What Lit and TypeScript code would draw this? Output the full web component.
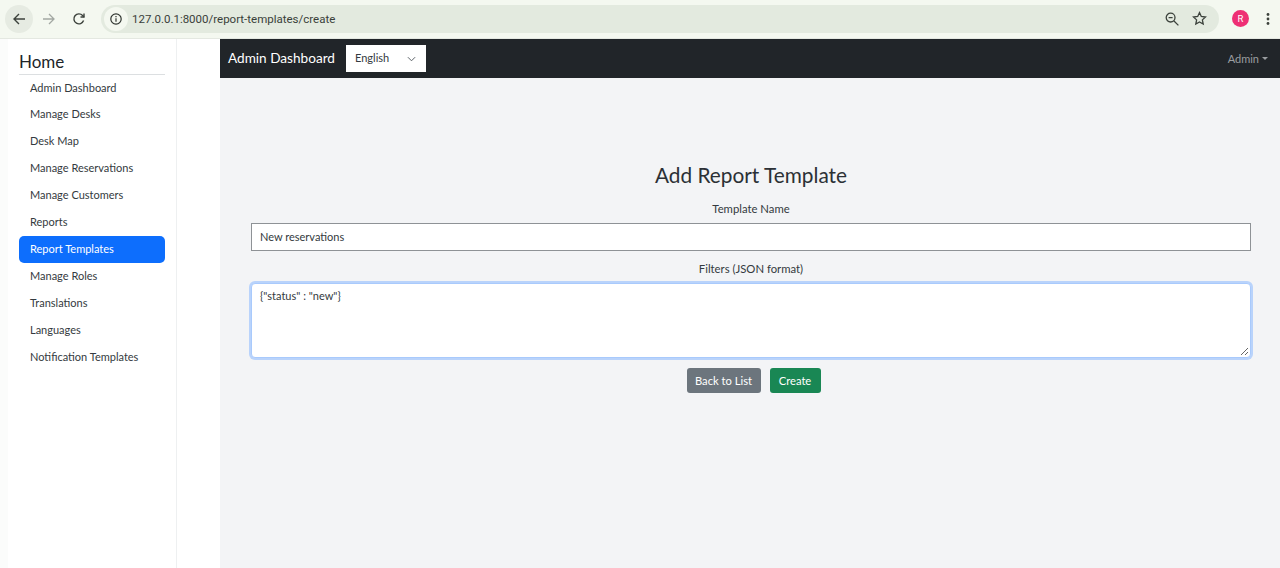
import { LitElement, html, css } from "lit";
import { customElement } from "lit/decorators.js";

const items = ["Admin Dashboard","Manage Desks","Desk Map","Manage Reservations","Manage Customers","Reports","Report Templates","Manage Roles","Translations","Languages","Notification Templates"];

@customElement("app-root")
export class AppRoot extends LitElement {
  static styles = css`
    :host { display: block; width: 1280px; height: 568px; overflow: hidden; font-family: Lato, "Noto Sans", sans-serif; color: #212529; background: #fff; }
    * { box-sizing: border-box; }
    .chrome { height: 39px; background: #f4f8f0; border-bottom: 1px solid #e4e8e1; display: flex; align-items: center; padding: 0 0 1px 5px; }
    .navbtn { width: 28px; height: 28px; border-radius: 50%; display: flex; align-items: center; justify-content: center; flex: none; margin-right: 2px; }
    .navbtn.back { background: #e6ebe2; }
    .navbtn svg, .pill svg, .dots { display: block; }
    .pill { margin-left: 6px; width: 1118px; height: 28px; border-radius: 14px; background: #e3eadf; display: flex; align-items: center; padding-left: 3px; padding-right: 12px; }
    .info { width: 24px; height: 24px; border-radius: 50%; background: #f4f8f0; display: flex; align-items: center; justify-content: center; flex: none; }
    .url { margin-left: 4px; font-size: 11.5px; color: #3a3f3a; flex: 1; font-family: Roboto, sans-serif; }
    .pill .zoom { margin-right: 13px; }
    .avatar { width: 17px; height: 17px; border-radius: 50%; background: #ee2f74; color: #fff; font-size: 9.5px; display: flex; align-items: center; justify-content: center; margin-left: 13px; flex: none; font-family: Roboto, sans-serif; }
    .dots { margin-left: 17px; }
    .body { display: flex; height: 529px; }
    .gutter { width: 8px; background: #fbfcfb; flex: none; }
    .sidebar { width: 169px; flex: none; padding: 11px 11px 0; border-right: 1px solid #eef0f1; background: #fff; }
    .spacer { width: 43px; flex: none; background: #fff; }
    h2 { margin: 0; font-size: 17px; font-weight: 400; line-height: 24px; border-bottom: 1px solid #dcdfe1; height: 25px; }
    ul { list-style: none; margin: 0; padding: 0; }
    li { height: 27px; display: flex; align-items: center; padding: 0 0 2px 11px; font-size: 11px; color: #343a40; border-radius: 5px; width: 146px; }
    li.first { height: 26px; }
    li.active { background: #0d6efd; color: #fff; }
    .main { flex: 1; background: #f3f4f6; display: flex; flex-direction: column; min-width: 0; }
    .topbar { height: 39px; background: #212529; display: flex; align-items: center; padding: 0 12px 0 8px; flex: none; }
    .brand { color: #fff; font-size: 13.6px; width: 118px; padding-bottom: 1px; }
    .lang { width: 80px; height: 27px; background: #fff; display: flex; align-items: center; justify-content: space-between; padding: 0 10px 0 9px; font-size: 11px; color: #343a40; }
    .lang span { padding-bottom: 2px; }
    .admin { margin-left: auto; color: #9a9da0; font-size: 11px; display: flex; align-items: center; gap: 3px; padding-bottom: 1px; }
    .caret { width: 0; height: 0; border-left: 3px solid transparent; border-right: 3px solid transparent; border-top: 3px solid #9a9da0; }
    .form { padding: 85px 29px 0 31px; display: flex; flex-direction: column; align-items: center; }
    h1 { margin: 0; font-size: 20.8px; font-weight: 400; line-height: 24px; height: 24px; color: #2b3035; }
    label { display: block; font-size: 11.3px; line-height: 14px; color: #343a40; }
    .l1 { margin-top: 15px; }
    .l2 { margin-top: 11px; }
    .input { margin-top: 7px; width: 100%; height: 28px; background: #fff; border: 1px solid #8e9296; display: flex; align-items: center; padding: 0 0 2px 8px; font-size: 11px; color: #343a40; }
    .area { position: relative; margin-top: 7px; width: 100%; height: 75px; background: #fff; border: 1px solid #a9cafc; border-radius: 4px; box-shadow: 0 0 0 2px #b9d3fb; padding: 5px 8px; font-size: 11px; color: #343a40; line-height: 14px; }
    .grip { position: absolute; right: 1px; bottom: 1px; }
    .actions { margin-top: 10px; margin-left: 5px; display: flex; gap: 9px; }
    .btn { height: 25px; display: flex; align-items: center; justify-content: center; border-radius: 3px; color: #fff; font-size: 11.2px; padding-bottom: 1px; }
    .gray { width: 74px; background: #6c757d; }
    .green { width: 51px; background: #198754; }
  `;

  render() {
    return html`
      <div class="chrome">
        <div class="navbtn back"><svg width="14" height="14" viewBox="0 0 14 14" fill="none" stroke="#3c423c" stroke-width="1.4"><path d="M13 7H2M7 2 2 7l5 5"/></svg></div>
        <div class="navbtn"><svg width="14" height="14" viewBox="0 0 14 14" fill="none" stroke="#a3a8a3" stroke-width="1.3"><path d="M1 7h11M7 2l5 5-5 5"/></svg></div>
        <div class="navbtn"><svg width="14" height="14" viewBox="0 0 14 14" fill="none" stroke="#3c423c" stroke-width="1.4"><path d="M11.6 8.6A5 5 0 1 1 10.6 3.5L12 5"/><path d="M12 1.5V5H8.5" /></svg></div>
        <div class="pill">
          <div class="info"><svg width="14" height="14" viewBox="0 0 14 14" fill="none" stroke="#2f342f" stroke-width="1.2"><circle cx="7" cy="7" r="5.2"/><path d="M7 6.2v3.6M7 4v1.2"/></svg></div>
          <div class="url">127.0.0.1:8000/report-templates/create</div>
          <svg class="zoom" width="14" height="14" viewBox="0 0 14 14" fill="none" stroke="#3c423c" stroke-width="1.3"><circle cx="5.6" cy="5.6" r="4.4"/><path d="M3.6 5.6h4M9 9l4.4 4.4"/></svg>
          <svg width="15" height="15" viewBox="0 0 15 15" fill="none" stroke="#3c423c" stroke-width="1.3"><path d="M7.5 1.6 9.3 5.5l4.2.5-3.1 2.9.8 4.2-3.7-2.1-3.7 2.1.8-4.2L1.5 6l4.2-.5z"/></svg>
        </div>
        <div class="avatar">R</div>
        <svg class="dots" width="4" height="12" viewBox="0 0 4 12" fill="#3c423c"><circle cx="2" cy="1.5" r="1.4"/><circle cx="2" cy="6" r="1.4"/><circle cx="2" cy="10.5" r="1.4"/></svg>
      </div>
      <div class="body">
        <div class="gutter"></div>
        <aside class="sidebar">
          <h2>Home</h2>
          <ul>${items.map((t, i) => html`<li class="${i === 0 ? "first" : ""} ${t === "Report Templates" ? "active" : ""}">${t}</li>`)}</ul>
        </aside>
        <div class="spacer"></div>
        <div class="main">
          <div class="topbar">
            <div class="brand">Admin Dashboard</div>
            <div class="lang"><span>English</span><svg width="9" height="6" viewBox="0 0 10 6" fill="none" stroke="#5a6066" stroke-width="1.1"><path d="M1 1l4 4 4-4"/></svg></div>
            <div class="admin">Admin<span class="caret"></span></div>
          </div>
          <div class="form">
            <h1>Add Report Template</h1>
            <label class="l1">Template Name</label>
            <div class="input">New reservations</div>
            <label class="l2">Filters (JSON format)</label>
            <div class="area">{"status" : "new"}
              <svg class="grip" width="9" height="9" viewBox="0 0 9 9" stroke="#666" stroke-width="1"><path d="M8 1 1 8M8 5 5 8"/></svg>
            </div>
            <div class="actions"><div class="btn gray">Back to List</div><div class="btn green">Create</div></div>
          </div>
        </div>
      </div>
    `;
  }
}
